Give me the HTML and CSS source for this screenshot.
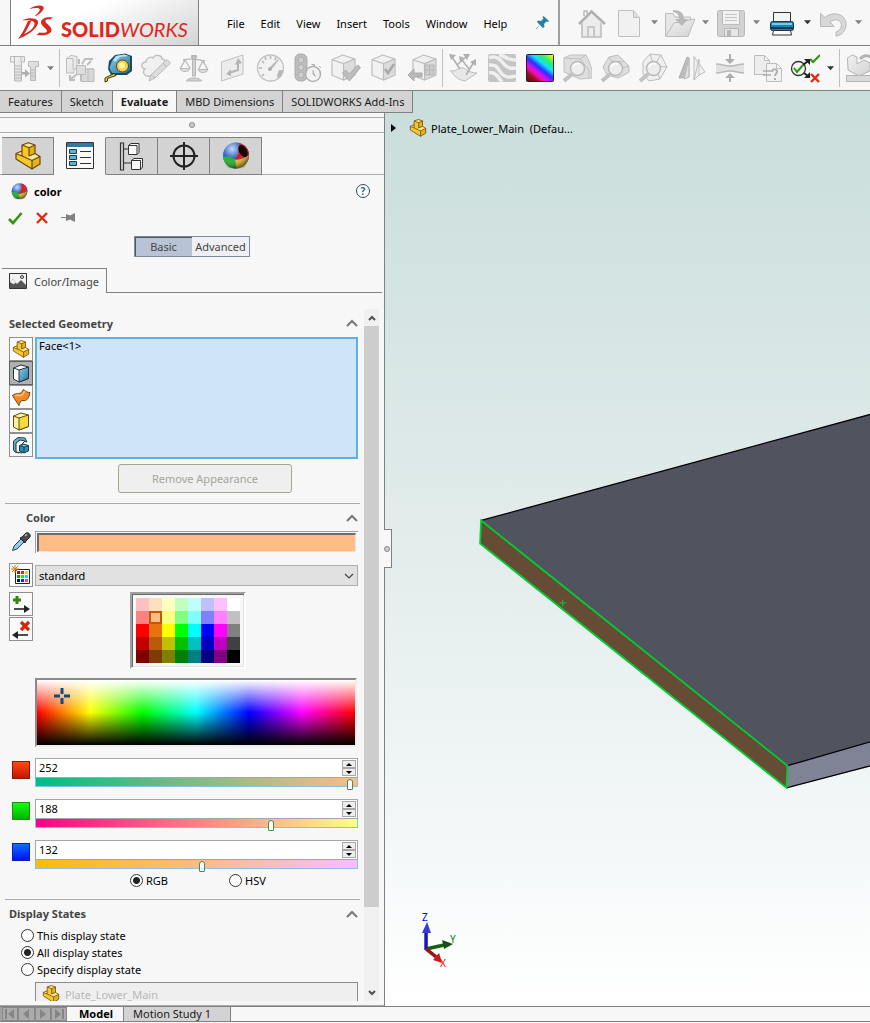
FILE: index.html
```html
<!DOCTYPE html>
<html lang="en">
<head>
  <meta charset="UTF-8" />
  <meta name="viewport" content="width=device-width, initial-scale=1.0"/>
  <title>SOLIDWORKS</title>
  <link rel="stylesheet" href="styles.css">
</head>
<body>

  <!-- shared icons -->
  <svg class="defs" width="0" height="0" aria-hidden="true">
    <defs>
      <linearGradient id="g-grey" x1="0" y1="0" x2="1" y2="1"><stop offset="0" stop-color="#f2f2f2"/><stop offset="1" stop-color="#d2d2d2"/></linearGradient>
      <linearGradient id="g-blue" x1="0" y1="0" x2="1" y2="1"><stop offset="0" stop-color="#8fd0ea"/><stop offset="1" stop-color="#1f7199"/></linearGradient>
      <linearGradient id="g-zebra" x1="0.1" y1="1" x2="0.9" y2="0"><stop offset="0" stop-color="#5a1408"/><stop offset="0.17" stop-color="#a01020"/><stop offset="0.27" stop-color="#f010a0"/><stop offset="0.37" stop-color="#d010ff"/><stop offset="0.5" stop-color="#2830ff"/><stop offset="0.65" stop-color="#10e0ff"/><stop offset="0.82" stop-color="#30f060"/><stop offset="1" stop-color="#f8f800"/></linearGradient>
      <radialGradient id="g-shine" cx="0.35" cy="0.25" r="0.75"><stop offset="0" stop-color="#fff" stop-opacity="0.75"/><stop offset="0.5" stop-color="#fff" stop-opacity="0"/><stop offset="1" stop-color="#000" stop-opacity="0.5"/></radialGradient>
    </defs>
    <symbol id="i-part" viewBox="0 0 26 28">
      <path fill="#f6c82d" d="M7 3 13.500.8 20 3v8.500l5 3V22l-8 5L1 17v-5.500L7 9z"/>
      <path fill="#fbe795" d="M7 3 13.500.8 20 3l-6 2.800zM1 11.500 7 9v5l4.500 2.500 2.500-2.500 6-2.500 5 3-8 4z"/>
      <path fill="#dba416" d="M14 5.800 20 3v8.500L14 14zM17 18.500l8-4V22l-8 5z" opacity="0.600"/>
      <path stroke="#6b4708" stroke-width="1.200" stroke-linejoin="round" d="M7 3 13.500.8 20 3v8.500l5 3V22l-8 5L1 17v-5.500L7 9zM7 3l7 2.800L20 3M14 5.800V14M7 9v5l10 4.500 8-4M17 18.500V27M1 11.500 7 14M14 14l6-2.500"/>
    </symbol>
    <symbol id="i-ball" viewBox="0 0 28 28">
      <ellipse cx="14" cy="24" rx="10" ry="3" fill="#bbb"/>
      <circle cx="14" cy="13.500" r="13" fill="#2a62c8"/>
      <path fill="#22b02c" d="M1 15c5-1.500 9 0 12 2.500l1.500 9C7 27 2 22 1 15z"/>
      <path fill="#e8c02a" d="M13 17.500c5 .5 10-1.500 14-5-.2 8-5 14-12.500 14z"/>
      <path fill="#d8141c" d="M17 1c6 1.500 10 6 10 11.500-4 3.500-9 5.500-14 5 3-4 4.500-10 4-16.500z"/>
      <circle cx="14" cy="13.500" r="13" fill="url(#g-shine)"/>
    </symbol>
    <symbol id="i-caret" viewBox="0 0 8 5"><path d="M0 0h8L4 4.500z"/></symbol>
    <symbol id="i-up" viewBox="0 0 12 8"><path stroke="#777" stroke-width="2" d="M1 7l5-5 5 5"/></symbol>
    <symbol id="i-lens" viewBox="0 0 30 30">
      <path stroke="#c2c2c2" stroke-width="4" d="M10 21l-8 7"/>
      <circle cx="15.500" cy="15.500" r="7" fill="#ededed" stroke="#bababa" stroke-width="1.500"/>
      <path stroke="#fff" stroke-width="1.500" d="M11 14c1-3 4-4 7-3"/>
    </symbol>
    <symbol id="i-cube" viewBox="0 0 26 28">
      <path fill="#f1f1f1" d="M1 6 12 1l13 4v17l-12 5L1 22z"/>
      <path fill="#dcdcdc" d="M13 10 25 5v17l-12 5z"/>
      <path stroke="#bcbcbc" stroke-width="1.200" d="M1 6 12 1l13 4v17l-12 5L1 22zM1 6l12 4 12-5M13 10v17"/>
    </symbol>
  </svg>

  <header class="titlebar">
    <div class="logo">
      <svg class="logo-mark" viewBox="0 0 36 36" aria-hidden="true">
        <g fill="#da291c">
          <path d="M12 3.500C16 1 21 0 24 1c4 1 1 6-6 10l-1-.5c4-3 6-6 4-7-2-.8-6-.4-9 .5z"/>
          <path d="M5 15c5-2.500 12-2.500 14.500.5C22 19 16 28 0 34c4-5 7-11 10-18l3.500-.5C11 21 9 25 6 29c8-3 12-9 10-12-2-2-6-2-11-1.500z"/>
          <path d="M35 12.500l-3 2c-3-.5-5 .3-4.500 2 1 2.500 6 5 6 8.500 0 4-6 6-15 5l3-2.500c4 .8 7.500.3 7.500-1.500 0-2.500-6-5-6-8.500 0-4 5-6 12-5z"/>
        </g>
      </svg>
      <span class="logo-text"><b>SOLID</b><i>WORKS</i></span>
    </div>
    <nav class="menu">
      <a href="#">File</a><a href="#">Edit</a><a href="#">View</a><a href="#">Insert</a><a href="#">Tools</a><a href="#">Window</a><a href="#">Help</a>
    </nav>
    <button class="pin" aria-label="Keep menu visible"><svg width="14" height="14" viewBox="0 0 14 14"><path fill="#2a7fa8" d="M7.500 0 13 5l-1 1-1.500-.5L8 8l.5 3-1.500 1-3-3L.5 13 0 12.500 4 9 1 6l1-1.500 3 .5 2.500-2.500L6.500 1z"/></svg></button>
    <div class="quick">
      <button class="tool" aria-label="Home" disabled><svg viewBox="0 0 30 30"><path fill="#ececec" d="M6 14v15h19V14L15.500 5z"/><path stroke="#bcbcbc" stroke-width="1.500" d="M6 15v14h19V15M8 8V3h3v3M18 29V19h-6v10"/><path stroke="#b0b0b0" stroke-width="2.500" d="M3 16 15.500 3.500 29 16"/></svg></button>
      <button class="tool" aria-label="New" disabled><svg viewBox="0 0 30 30"><path fill="#f1f1f1" stroke="#c0c0c0" d="M4.500 2.500h15l6 7v19h-21z"/><path fill="#ddd" stroke="#c0c0c0" d="M19.500 2.500v7h6"/></svg></button>
      <button class="drop" aria-label="New options"><svg><use href="#i-caret"/></svg></button>
      <button class="tool" aria-label="Open" disabled><svg viewBox="0 0 30 30"><path fill="#e6e6e6" stroke="#bcbcbc" d="M.5 28V5.500H8L10 9h15.500v4"/><path fill="url(#g-grey)" stroke="#bcbcbc" d="M.5 28.500 9 15l21-4-7 17.500z"/><path fill="#b8b8b8" d="M8 2c7 0 11 3 11 9h4l-6 7-7-7h4c0-4-1-6-6-7z"/></svg></button>
      <button class="drop" aria-label="Open options"><svg><use href="#i-caret"/></svg></button>
      <button class="tool" aria-label="Save" disabled><svg viewBox="0 0 30 30"><rect x="1.500" y="2.500" width="27" height="26" rx="2" fill="#d2d2d2" stroke="#b8b8b8"/><path fill="#f2f2f2" stroke="#bdbdbd" d="M6.500 2.500h17v14h-17z"/><path stroke="#c4c4c4" d="M9 6.500h12M9 9.500h12M9 12.500h12"/><path fill="#e6e6e6" stroke="#b4b4b4" d="M8.500 20.500h14v8h-14z"/><path fill="#b8b8b8" d="M11 22h4v6h-4z"/></svg></button>
      <button class="drop" aria-label="Save options"><svg><use href="#i-caret"/></svg></button>
      <button class="tool" aria-label="Print"><svg viewBox="0 0 30 30"><path fill="#f4f4f4" stroke="#333" d="M6.500 4.500h17V14h-17z"/><rect x="3.500" y="13.500" width="23" height="9" rx="2" fill="#1e80b0" stroke="#12394d"/><path fill="#7cc6e4" d="M5 15h20v2H5z"/><path fill="#12394d" d="M4 19h22v2H4z"/><path fill="#fafafa" stroke="#333" d="M6.500 22.500h17l1 4.500h-19z"/></svg></button>
      <button class="drop on" aria-label="Print options"><svg><use href="#i-caret"/></svg></button>
      <button class="tool" aria-label="Undo" disabled><svg viewBox="0 0 30 30"><path fill="#d8d8d8" stroke="#b8b8b8" d="M2.500 5.500 7 9.500C16 2 28 7 28 16c0 7-4 11-10 12v-4c5-2 6-5 5-9-2-4-7-4-11-1l4 4.500H2.500z"/></svg></button>
      <button class="drop" aria-label="Undo options"><svg><use href="#i-caret"/></svg></button>
    </div>
  </header>

  <div class="toolbar">
    <button class="tool" aria-label="Hole Wizard" disabled><svg viewBox="0 0 30 30"><path fill="url(#g-grey)" stroke="#b8b8b8" d="M.5 3.500h14V9h-3v19h-7V9h-4zM4.500 3.500V9M11 3.500V9M18.500 8.500h10v5h-3v14h-5v-14h-2z"/><path stroke="#b8b8b8" d="M5 13h6M5 16h6M5 19h6M5 22h6M5 25h6M21 17h4M21 20h4M21 23h4"/><path fill="#b0b0b0" d="M12 19h3v-3l5 4.500-5 4v-3h-3z"/></svg></button>
    <button class="drop" aria-label="Hole options"><svg><use href="#i-caret"/></svg></button>
    <span class="sep"></span>
    <button class="tool" aria-label="Design Study" disabled><svg viewBox="0 0 30 30"><path fill="url(#g-grey)" stroke="#bcbcbc" d="M1.500 5.500 6 2.500l6 1V16H9v4H1.500zM1.500 5.500H8V16M16 16h13v12.500H16z"/><path fill="#ddd" stroke="#bcbcbc" d="M11.500 12.500h9v9h-9zM20 16h9M23 16v12"/><path stroke="#bcbcbc" stroke-width="2" d="M14 11V6M17 11l3-5h8M22 12l4-4M12 21l-6 5M5 22v5h5M16 22v6"/></svg></button>
    <button class="tool" aria-label="Measure"><svg viewBox="0 0 30 30"><path fill="#174a66" d="M6 8 12 2l10-1.500L29 3v15l-5 4H8l-3-6z"/><path fill="url(#g-blue)" d="M9 8l4-5 8-1.500 6 2V17l-4 3H9L6.500 15z"/><path fill="#b5e2f3" d="m10 7 3-4 8-1.500L26 3l-9 1-5 5z"/><circle cx="19.500" cy="13" r="6" fill="#f7d54a" stroke="#5b4713"/><circle cx="19" cy="12.500" r="3" fill="#fdf2a8"/><path fill="#f5d22c" stroke="#3a2d05" d="M11 20.500 2 25v4l2.500-1v-2.500L13 22.500z"/></svg></button>
    <button class="tool" aria-label="Markup" disabled><svg viewBox="0 0 30 30"><path fill="#f0f0f0" stroke="#bebebe" stroke-width="1.300" d="M7 23c-4 1-6-5-3-7-5-1-4-7 1-7 0-4 5-6 7-4 2-4 9-3 9 1 3 0 4 3 3 6L12 24z"/><path fill="#ddd" stroke="#b8b8b8" d="M26 6.500 29.500 10 14 25l-6 3 2-6z"/><path stroke="#b8b8b8" d="m10 22 4 3M22 10l3.500 4"/></svg></button>
    <button class="tool" aria-label="Mass Properties" disabled><svg viewBox="0 0 30 30"><path fill="#d2d2d2" stroke="#b5b5b5" d="M13.500 3.500h3V23h-3zM7.500 28c1-4 14-4 15 0zM12.500 2.500h5V5h-5z"/><path stroke="#b8b8b8" stroke-width="1.300" d="M4 7c8-2 14-1 22 1M6 7 1.500 15M6 7l5 8M24 8l-4.500 8M24 8l4.500 8"/><path fill="#dcdcdc" stroke="#b8b8b8" d="M1 15.500h10c-1 4-9 4-10 0zM19 16.500h10c-1 4-9 4-10 0z"/></svg></button>
    <button class="tool" aria-label="Section Properties" disabled><svg viewBox="0 0 30 30"><path fill="#ececec" stroke="#c0c0c0" d="M4.500 9 26 2v19L4.500 28z"/><path stroke="#b4b4b4" stroke-width="2" d="M21 9v8l-9 3"/><path fill="#b4b4b4" d="m21 5 4 5-7 2zM9 21l5-5v7z"/></svg></button>
    <button class="tool" aria-label="Sensor" disabled><svg viewBox="0 0 30 30"><circle cx="15.500" cy="15" r="13" fill="#f2f2f2" stroke="#c2c2c2" stroke-width="1.300"/><path stroke="#b5b5b5" stroke-width="1.500" d="M15.500 3v3M4 15h3M7 8l2 2M7 23l2-2M10 4l1 3M21 4l-1 3"/><path fill="#b8b8b8" d="M14 15 23 6l1 1-8 10zM22 22l2-5h4c0 3-2 7-5 9z"/><circle cx="15" cy="16" r="2" fill="#b0b0b0"/></svg></button>
    <button class="tool" aria-label="Performance" disabled><svg viewBox="0 0 30 30"><rect x="2" y="1" width="12" height="27" rx="5" fill="#bdbdbd" stroke="#aaa"/><g fill="#cfcfcf" stroke="#aeaeae"><circle cx="8" cy="7" r="3"/><circle cx="8" cy="14.500" r="3"/><circle cx="8" cy="22" r="3"/></g><circle cx="20" cy="21" r="7.500" fill="#f3f3f3" stroke="#b2b2b2" stroke-width="1.600"/><path fill="#bbb" stroke="#b2b2b2" d="M20 17v4l3 3M18.500 11.500h3v2M26 13l2 2"/></svg></button>
    <button class="tool" aria-label="Check" disabled><svg viewBox="0 0 30 30"><use href="#i-cube" width="25" height="27" y="1"/><path fill="#bdbdbd" stroke="#aaa" d="m11.500 20 3-3 4 4 8-9 3 2.500L18.500 28z"/></svg></button>
    <button class="tool" aria-label="Geometry Analysis" disabled><svg viewBox="0 0 30 30"><use href="#i-cube" width="25" height="27" x="2" y="1"/><path stroke="#a8a8a8" stroke-width="2.500" d="m16 16 3 4 6-9"/></svg></button>
    <button class="tool" aria-label="Import Diagnostics" disabled><svg viewBox="0 0 30 30"><use href="#i-cube" width="25" height="27" x="5" y="1"/><path fill="#ccc" stroke="#b4b4b4" d="M18 12h9v10h-9zM18 17h9M22.500 12v10"/><path fill="#b8b8b8" stroke="#aaa" d="m1 22 6-6v4h8v4H7v4z"/></svg></button>
    <span class="sep"></span>
    <button class="tool" aria-label="Deviation" disabled><svg viewBox="0 0 30 30"><path fill="#e8e8e8" stroke="#bdbdbd" d="M2.500 17.500C8 20 12 12 17 16c4 3 8 4 12 4l-12 8C10 27 6 23 2.500 17.500z"/><path stroke="#b0b0b0" stroke-width="1.600" d="M12 16 4 4M9 12l10-9M18 22l8-13M14 7l7 9"/><path fill="#b0b0b0" d="m1 1 7 1-5 5zM15 1h7l-3 6zM28 6v7l-6-4zM11 3l6 2-5 4z"/></svg></button>
    <button class="tool" aria-label="Zebra Stripes" disabled><svg viewBox="0 0 30 30"><rect x="2" y="1" width="28" height="28" rx="2" fill="#c4c4c4"/><path stroke="#efefef" stroke-width="3.500" d="M3 5c7-3 11 1 14 5s8 6 13 5M13 2c5 0 7 5 17 5M3 12c8-1 9 4 12 8s9 5 15 3M3 20c7-1 8 3 13 9"/></svg></button>
    <button class="tool" aria-label="Curvature"><svg viewBox="0 0 30 30"><rect x="2.500" y="1.500" width="27" height="27" rx="1" fill="url(#g-zebra)" stroke="#222"/></svg></button>
    <button class="tool" aria-label="Draft Analysis" disabled><svg viewBox="0 0 30 30"><path fill="#dedede" stroke="#c0c0c0" d="M2 5l6-3h16l3 6 3 9v8l-12 1L2 19z"/><path stroke="#c0c0c0" d="M2 5l16 1 6-4M18 6l9 11v8"/><use href="#i-lens"/></svg></button>
    <button class="tool" aria-label="Undercut Analysis" disabled><svg viewBox="0 0 30 30"><path fill="#dedede" stroke="#bdbdbd" d="M3 14l6-10 9-2 6 6 5 5v6l-5 3-6 3-11-3z"/><path stroke="#bdbdbd" d="m9 4 4 6 11-2M29 13l-7 2"/><use href="#i-lens"/></svg></button>
    <button class="tool" aria-label="Parting Line Analysis" disabled><svg viewBox="0 0 30 30"><path fill="#efefef" stroke="#bdbdbd" d="m5 9 7-8 11 1 6 12-7 12-11 2-6-7z"/><path stroke="#bdbdbd" d="m12 1 4 12 13 1M23 2l-7 11 6 13"/><use href="#i-lens"/></svg></button>
    <button class="tool" aria-label="Symmetry Check" disabled><svg viewBox="0 0 30 30"><path fill="#bdbdbd" stroke="#adadad" d="M3 25 11 4l2 1v19z"/><path fill="#e0e0e0" stroke="#b8b8b8" d="M8 26 13 5v19z"/><path fill="#f1f1f1" stroke="#bdbdbd" d="M18 3.500 29 19l-6 3-5 5zM18 27l5-21v16"/></svg></button>
    <button class="tool" aria-label="Thickness Analysis" disabled><svg viewBox="0 0 30 30"><path fill="#e2e2e2" d="M2 11c6 0 8 2 14 2s8-2 14-2v9c-6 0-8-2-14-2s-8 2-14 2z"/><path stroke="#b8b8b8" stroke-width="1.300" d="M2 11c6 0 8 2 14 2s8-2 14-2M2 20c6 0 8-2 14-2s8 2 14 2"/><path fill="#adadad" d="M15 1h2v5h4l-5 5-5-5h4zM15 29h2v-4h4l-5-5-5 5h4z"/></svg></button>
    <button class="tool" aria-label="Compare Documents" disabled><svg viewBox="0 0 30 30"><path fill="#ededed" stroke="#bdbdbd" d="M2.500 2.500h10l5 5v14h-15zM12.500 2.500v5h5"/><path fill="#f2f2f2" stroke="#bdbdbd" d="M14.500 10.500h10l5 5v13h-15zM24.500 10.500v5h5"/><path stroke="#adadad" stroke-width="1.600" d="M11 18h8M11 22h8"/><path stroke="#b0b0b0" stroke-width="2" d="M20 19c0-4 6-3 5 0-.5 2-2 2-2 4M23 25v2"/></svg></button>
    <button class="tool" aria-label="Check Active Document"><svg viewBox="0 0 30 30"><circle cx="8.500" cy="15.500" r="7" fill="#f4f4f4" stroke="#333" stroke-width="1.300"/><path stroke="#2c9410" stroke-width="2" d="m4 15 3 4 6-7M20 6l3 3 7-7"/><path stroke="#222" stroke-width="2" d="m13 12 5-4M14 20l4 3"/><path fill="#222" d="M14 6h6v6zM14 25h6v-6z"/><path stroke="#e32b0c" stroke-width="2.400" d="m21 21 8 8M29 21l-8 8"/></svg></button>
    <button class="drop on" aria-label="Check options"><svg><use href="#i-caret"/></svg></button>
    <span class="sep"></span>
    <button class="tool" aria-label="Simulation" disabled><svg viewBox="0 0 30 30"><path fill="url(#g-grey)" stroke="#b4b4b4" d="M2.500 5 7 2l5 2v7l7-4 6 3v8l-11 5-11-6z"/><path fill="#dadada" stroke="#b4b4b4" d="M1.500 22.500h28v6h-28z"/><path stroke="#b4b4b4" stroke-width="3" d="M15 6c5-6 11-3 14 2"/></svg></button>
  </div>

  <main class="workspace">
    <nav class="ribbon">
      <a href="#">Features</a><a href="#">Sketch</a><a href="#" class="active">Evaluate</a><a href="#">MBD Dimensions</a><a href="#">SOLIDWORKS Add-Ins</a>
    </nav>

    <div class="content">
      <aside class="panel">
        <div class="grip"><span class="dot"></span></div>

        <div class="manager-tabs">
          <button aria-label="Feature tree"><svg width="26" height="28"><use href="#i-part"/></svg></button>
          <button class="active" aria-label="Property manager"><svg width="28" height="28" viewBox="0 0 28 28"><path fill="#fafafa" stroke="#333" d="M.5.5h27v26H.5z"/><path fill="#2b7da5" d="M1 1h26v4H1z"/><path fill="#5fb0d3" stroke="#123e55" d="M3.500 7.500h7v4h-7zM3.500 13.500h7v4h-7zM3.500 19.500h7v4h-7z"/><path stroke="#333" d="M14 9.500h11M14 15.500h11M14 21.500h11"/></svg></button>
          <button aria-label="Configurations"><svg width="26" height="29" viewBox="0 0 26 29"><path stroke="#333" stroke-width="1.200" d="M1.500 1v27h3V1zM4 7h6M4 21h9"/><g fill="#fafafa" stroke="#333"><path d="M9.500 3.500 12 1.500h8v9l-2 2H9.500zM12.500 18.500l2.500-2h8.500v8.500l-2 2.500h-9z"/><path fill="none" d="M9.500 3.500H18v9M12.500 18.500h9v9"/></g></svg></button>
          <button aria-label="Dimension expert"><svg width="28" height="28" viewBox="0 0 28 28"><circle cx="14" cy="14" r="10.500" stroke="#222" stroke-width="2"/><path stroke="#222" stroke-width="2" d="M14 0v28M0 14h28"/></svg></button>
          <button aria-label="Display manager"><svg width="28" height="28" viewBox="0 0 28 28"><use href="#i-ball"/><ellipse cx="21" cy="9" rx="4" ry="6.500" fill="#1a0505" transform="rotate(-30 21 9)"/></svg></button>
        </div>

        <div class="panel-title">
          <svg width="17" height="17"><use href="#i-ball"/></svg>
          <h1>color</h1>
          <button class="help" aria-label="Help">?</button>
        </div>

        <div class="confirm">
          <button aria-label="OK"><svg width="15" height="14" viewBox="0 0 15 14"><path stroke="#2f9a0c" stroke-width="2.600" d="m1 8 4 4 8.500-10"/></svg></button>
          <button aria-label="Cancel"><svg width="12" height="12" viewBox="0 0 12 12"><path stroke="#df2a0a" stroke-width="2.400" d="m1 1 10 10M11 1 1 11"/></svg></button>
          <button aria-label="Keep visible"><svg width="15" height="11" viewBox="0 0 15 11"><path fill="#808080" d="M0 5h5V2l4 1.500L14 1v9L9 7.500 5 9V6H0z"/></svg></button>
        </div>

        <div class="mode">
          <button class="active">Basic</button><button>Advanced</button>
        </div>

        <div class="subtabs">
          <button><svg width="18" height="16" viewBox="0 0 18 16"><path fill="#f2f2f2" stroke="#333" d="M.5.5h17v15H.5z"/><path fill="#555" d="M1 9l3-3 4 5 4-4 5 5v3H1z"/><path fill="#f2f2f2" d="m1 9 3-3 3 4-3 1z"/><circle cx="13" cy="4" r="1.500" stroke="#333"/></svg>Color/Image</button>
        </div>

        <div class="scroll">
          <form class="props">
            <section>
              <h2>Selected Geometry <svg><use href="#i-up"/></svg></h2>
              <div class="row">
                <div class="filters">
                  <button type="button" aria-label="Select part"><svg width="18" height="18"><use href="#i-part"/></svg></button>
                  <button type="button" class="active" aria-label="Select faces"><svg width="18" height="19" viewBox="0 0 18 19"><path fill="#fff" stroke="#26323a" d="M1.500 4 9 1l7.500 2v11.500L7 18l-5.500-3z"/><path fill="url(#g-blue)" stroke="#26323a" d="m7 6 9.500-3v11.500L7 18z"/><path stroke="#26323a" d="M1.500 4 7 6"/></svg></button>
                  <button type="button" aria-label="Select surfaces"><svg width="20" height="19" viewBox="0 0 20 19"><path fill="#f08a24" stroke="#7c3c04" d="M1.500 7.500c4-3 6-1 9-3 1-1 1-2 2-3 2 2 4 3 6.500 3-1 5-3 9-7 8-3 0-3 2-4 5-2-3-4-6-6.500-10z"/><path stroke="#ffc27a" stroke-width="1.500" d="M4 8c3-2 5 1 7-1l3-4"/></svg></button>
                  <button type="button" aria-label="Select bodies"><svg width="18" height="19" viewBox="0 0 18 19"><path fill="#fff3a0" stroke="#5e4a08" d="M1.500 4 9 1l7.500 2v11.500L7 18l-5.500-3z"/><path fill="#f7dc3c" stroke="#5e4a08" d="m7 6 9.500-3v11.500L7 18z"/><path stroke="#5e4a08" d="M1.500 4 7 6"/></svg></button>
                  <button type="button" aria-label="Select features"><svg width="18" height="19" viewBox="0 0 18 19"><path fill="#5fb0d3" stroke="#26424f" d="M1.500 14V5L6 1.500 13 2l2 4-5-1-3 3v9l-4-1z"/><path fill="#f5f5f5" stroke="#333" d="M4 16V7l4-3 5 1-3 3v9z"/><path fill="#2f8cba" stroke="#123e55" d="M7.500 9.500 11 8l5.500 1.500V15L12 17l-4.500-2zM7.500 9.500 12 11l4.500-1.500M12 11v6"/></svg></button>
                </div>
                <textarea class="selection" aria-label="Selected geometry" spellcheck="false">Face&lt;1&gt;</textarea>
              </div>
              <button type="button" class="remove" disabled>Remove Appearance</button>
            </section>

            <section>
              <h2 class="sub">Color <svg><use href="#i-up"/></svg></h2>
              <div class="row">
                <button type="button" class="plain" aria-label="Pick colour"><svg width="20" height="20" viewBox="0 0 20 20"><path fill="#8fcbe6" stroke="#174a66" d="M1.500 18.500 3 14l7-7 3 3-7 7z"/><path fill="#4a4a4a" stroke="#222" d="m9 6 2-1 4-4c2-1 5 1 4 4l-4 4-1 2z"/><path stroke="#b5b5b5" stroke-width="1.500" d="m14 4 2-2"/></svg></button>
                <div class="swatch"><span></span></div>
              </div>
              <div class="row preset">
                <button type="button" class="square" aria-label="Create swatch"><svg width="20" height="20" viewBox="0 0 20 20"><path fill="#fff" stroke="#222" d="M4.500 4.500h14v14h-14z"/><path fill="#d22" d="M10 6h3v3h-3z"/><path fill="#fc0" d="M14 6h3v3h-3z"/><path fill="#911" d="M6 6h3v3H6z"/><path fill="#0a0" d="M6 10h3v3H6z"/><path fill="#0e2" d="M10 10h3v3h-3z"/><path fill="#0df" d="M14 10h3v3h-3z"/><path fill="#00a" d="M6 14h3v3H6z"/><path fill="#22d" d="M10 14h3v3h-3z"/><path fill="#e3d" d="M14 14h3v3h-3z"/><path stroke="#d57a10" d="M4 0v8M0 4h8M1 1l6 6M7 1 1 7"/></svg></button>
                <div class="select">
                  <select aria-label="Swatch"><option>standard</option></select>
                  <svg width="10" height="6" viewBox="0 0 10 6"><path stroke="#444" stroke-width="1.200" d="m1 1 4 4 4-4"/></svg>
                </div>
              </div>
              <div class="row swatches">
                <div class="filters">
                  <button type="button" class="square" aria-label="Add to swatch"><svg width="18" height="19" viewBox="0 0 18 19"><path stroke="#2f8a08" stroke-width="3" d="M5 1v8M1 5h8"/><path stroke="#222" stroke-width="1.600" d="M2 14h13"/><path fill="#222" d="m12 10 6 4-6 4z"/></svg></button>
                  <button type="button" class="square" aria-label="Remove from swatch"><svg width="18" height="19" viewBox="0 0 18 19"><path stroke="#d5260a" stroke-width="3.200" d="m9 2 8 8M17 2l-8 8"/><path stroke="#222" stroke-width="1.600" d="M3 15h13"/><path fill="#222" d="m6 11-6 4 6 4z"/></svg></button>
                </div>
                <div class="palette" id="palette"></div>
              </div>
              <div class="spectrum">
                <svg class="cross" width="16" height="16" viewBox="0 0 16 16"><path stroke="#0b4c86" stroke-width="3" d="M8 0v6M8 10v6M0 8h6M10 8h6"/></svg>
              </div>

              <div class="row channel red">
                <i></i>
                <div class="field">
                  <div class="num"><input type="number" aria-label="Red" value="252" min="0" max="255"><span class="spin"><button type="button" aria-label="Red up"></button><button type="button" aria-label="Red down"></button></span></div>
                  <input type="range" aria-label="Red level" min="0" max="255" value="252">
                </div>
              </div>
              <div class="row channel green">
                <i></i>
                <div class="field">
                  <div class="num"><input type="number" aria-label="Green" value="188" min="0" max="255"><span class="spin"><button type="button" aria-label="Green up"></button><button type="button" aria-label="Green down"></button></span></div>
                  <input type="range" aria-label="Green level" min="0" max="255" value="188">
                </div>
              </div>
              <div class="row channel blue">
                <i></i>
                <div class="field">
                  <div class="num"><input type="number" aria-label="Blue" value="132" min="0" max="255"><span class="spin"><button type="button" aria-label="Blue up"></button><button type="button" aria-label="Blue down"></button></span></div>
                  <input type="range" aria-label="Blue level" min="0" max="255" value="132">
                </div>
              </div>
              <div class="model">
                <label><input type="radio" name="model" checked>RGB</label>
                <label><input type="radio" name="model">HSV</label>
              </div>
            </section>

            <section>
              <h2>Display States <svg><use href="#i-up"/></svg></h2>
              <div class="states">
                <label><input type="radio" name="state">This display state</label>
                <label><input type="radio" name="state" checked>All display states</label>
                <label><input type="radio" name="state">Specify display state</label>
              </div>
              <div class="statelist"><svg width="20" height="18"><use href="#i-part"/></svg>Plate_Lower_Main</div>
            </section>
          </form>
          <div class="scrollbar">
            <button aria-label="Scroll up"><svg width="8" height="6" viewBox="0 0 8 6"><path stroke="#505050" stroke-width="2" d="m1 5 3-3 3 3"/></svg></button>
            <span class="thumb"></span>
            <button aria-label="Scroll down"><svg width="8" height="6" viewBox="0 0 8 6"><path stroke="#505050" stroke-width="2" d="m1 1 3 3 3-3"/></svg></button>
          </div>
        </div>
        <div class="panel-end"></div>
        <button class="splitter" aria-label="Collapse panel"><span class="dot"></span></button>
      </aside>

      <div class="viewport">
        <svg class="scene" viewBox="0 0 485 892" preserveAspectRatio="xMinYMin slice">
          <path fill="#51535f" d="M96 407 485 301V630l-83 22z"/>
          <path fill="#808296" d="m402 652 83-24v25l-84 21z"/>
          <path fill="#664b35" d="m96 407 306 245-1 22L95 430z"/>
          <path stroke="#000" stroke-width="1.300" d="M96 407 485 301M402 652l83-24M401 674l84-22"/>
          <path stroke="#0c3" stroke-width="1.800" d="m96 407 306 245-1 22L95 430z"/>
          <path stroke="#0c3" d="M174 489.500h7M177.500 486v7"/>
          <g class="triad">
            <path stroke="#15600f" stroke-width="3.500" d="m41 835 18-4"/><path fill="#1b4d16" d="m57 826 11 4-9 5z"/>
            <path stroke="#1818b8" stroke-width="3.500" d="M41 836v-17"/><path fill="#3a3ad8" d="m37 819 5-11 4 11z"/>
            <path stroke="#a01414" stroke-width="3.500" d="m41 835 10 8"/><path fill="#c81a1a" d="m54 839 3 10-9-3z"/>
            <text x="37" y="807" fill="#00f">Z</text><text x="65" y="829" fill="#080">Y</text><text x="55" y="853" fill="#f00">X</text>
          </g>
        </svg>
        <div class="flyout">
          <button aria-label="Expand tree"><svg width="5" height="8" viewBox="0 0 5 8"><path fill="#000" d="m0 0 5 4-5 4z"/></svg></button>
          <svg width="18" height="18"><use href="#i-part"/></svg>
          <span>Plate_Lower_Main &nbsp;(Defau...</span>
        </div>
      </div>
    </div>
  </main>

  <footer class="bottom">
    <div class="navs">
      <button aria-label="First tab"><svg width="10" height="10" viewBox="0 0 10 10"><path d="M0 0h2v10H0zM9 0v10L3 5z"/></svg></button>
      <button aria-label="Previous tab"><svg width="10" height="10" viewBox="0 0 10 10"><path d="M8 0v10L2 5z"/></svg></button>
      <button aria-label="Next tab"><svg width="10" height="10" viewBox="0 0 10 10"><path d="M2 0v10l6-5z"/></svg></button>
      <button aria-label="Last tab"><svg width="10" height="10" viewBox="0 0 10 10"><path d="M8 0h2v10H8zM1 0v10l6-5z"/></svg></button>
    </div>
    <a href="#" class="active">Model</a>
    <a href="#">Motion Study 1</a>
  </footer>

  <script>
    const rows = [
      ["#ffc0c0", "#ffdfc0", "#ffffc0", "#c0ffc0", "#c0ffff", "#c0c0ff", "#ffc0ff", "#ffffff"],
      ["#ff8080", "#ffbc84", "#ffff80", "#80ff80", "#80ffff", "#8080ff", "#ff80ff", "#c0c0c0"],
      ["#ff0000", "#e8720c", "#ffff00", "#00ff00", "#00ffff", "#0000ff", "#ff00ff", "#808080"],
      ["#c00000", "#b85c0a", "#c0c000", "#00c000", "#00c0c0", "#0000c0", "#c000c0", "#404040"],
      ["#800000", "#7c3c06", "#808000", "#008000", "#008080", "#000080", "#800080", "#000000"]
    ];
    const palette = document.getElementById('palette');

    rows.flat().forEach(color => {
      const cell = document.createElement('button');
      cell.type = 'button';
      cell.style.background = color;
      cell.setAttribute('aria-label', color);
      if (color === '#ffbc84') cell.className = 'picked';
      cell.addEventListener('click', () => {
        palette.querySelector('.picked').classList.remove('picked');
        cell.classList.add('picked');
      });
      palette.appendChild(cell);
    });
  </script>

</body>
</html>
```
FILE: styles.css
```css
:root {
  --bg: #f7f7f7;
  --tab: #d3d3d3;
  --line: #808080;
  --soft-line: #ababab;
  --text: #1a1a1a;
  --heading: #444;
}

* {
  box-sizing: border-box;
}

body {
  margin: 0;
  height: 100vh;
  display: flex;
  flex-direction: column;
  background: var(--bg);
  color: var(--text);
  font-family: "Noto Sans", "Open Sans", sans-serif;
  font-size: 11px;
  fill: none;
  overflow: hidden;
}

button, input, select, textarea {
  font: inherit;
  color: inherit;
  margin: 0;
  padding: 0;
  border: none;
  border-radius: 0;
  background: none;
}

a {
  color: inherit;
  text-decoration: none;
}

svg {
  display: block;
  flex: none;
}

.defs {
  position: absolute;
}

/* title bar */
.titlebar {
  display: flex;
  align-items: center;
  height: 46px;
  border-bottom: 1px solid var(--line);
  flex: none;
}

.logo {
  display: flex;
  align-items: center;
  align-self: stretch;
  width: 189px;
  margin-left: 10px;
  padding-left: 7px;
  gap: 7px;
  border: solid var(--line);
  border-width: 0 1px;
  background: linear-gradient(155deg, #fff 35%, #d4d4d4);
  flex: none;
}

.logo-mark {
  width: 36px;
  height: 36px;
}

.logo-text {
  font-family: Lato, sans-serif;
  font-size: 20px;
  line-height: 24px;
  color: #da291c;
  margin-top: 12px;
}

.logo-text b {
  font-weight: 900;
}

.menu {
  display: flex;
  padding: 2px 0 0 20px;
  color: #000;
}

.menu a {
  padding: 4px 8px;
}

.pin {
  margin-left: auto;
  padding: 0 8px;
}

.quick {
  display: flex;
  align-items: center;
  align-self: stretch;
  padding: 0 5px 0 12px;
  border-left: 2px solid #a0a0a0;
  flex: none;
}

.tool {
  width: 38px;
  padding: 0 4px;
  flex: none;
}

.tool svg {
  width: 30px;
  height: 30px;
}

.drop {
  display: flex;
  justify-content: center;
  width: 13px;
  fill: #808080;
  flex: none;
}

.drop.on {
  fill: #333;
}

.drop svg {
  width: 7px;
  height: 5px;
}

.toolbar {
  display: flex;
  align-items: center;
  height: 45px;
  padding-left: 6px;
  border-bottom: 1px solid var(--line);
  overflow: hidden;
  flex: none;
}

.sep {
  width: 1px;
  height: 38px;
  margin: 0 1px;
  background: #c0c0c0;
  flex: none;
}

.drop + .sep {
  margin-left: 2px;
}

/* workspace */
.workspace {
  flex: 1;
  min-height: 0;
  display: flex;
  flex-direction: column;
  background: linear-gradient(#c9dddb, #e0ebea 45%, #f3f7f8 80%, #fff);
}

.ribbon {
  display: flex;
  height: 22px;
  line-height: 21px;
  flex: none;
}

.ribbon a {
  padding: 0 8px;
  background: var(--tab);
  border: solid var(--line);
  border-width: 0 1px 1px 0;
}

.ribbon a.active {
  background: var(--bg);
  font-weight: bold;
}

.content {
  flex: 1;
  min-height: 0;
  display: flex;
}

.panel {
  position: relative;
  display: flex;
  flex-direction: column;
  width: 385px;
  padding-top: 4px;
  background: var(--bg);
  border-right: 1px solid var(--line);
  flex: none;
}

.dot {
  display: block;
  width: 6px;
  height: 6px;
  border: 1px solid #8c8c8c;
  border-radius: 50%;
  background: #ccc;
}

.grip {
  display: flex;
  align-items: center;
  justify-content: center;
  height: 16px;
  border: solid var(--soft-line);
  border-width: 1px 0;
  margin-bottom: 4px;
  flex: none;
}

.manager-tabs {
  display: flex;
  height: 38px;
  padding-left: 2px;
  border-bottom: 1px solid var(--soft-line);
  flex: none;
}

.manager-tabs button {
  display: flex;
  align-items: center;
  justify-content: center;
  width: 52px;
  height: 38px;
  background: var(--tab);
  border: 1px solid var(--line);
  border-left: none;
}

.manager-tabs button.active {
  background: var(--bg);
  border-top-color: var(--bg);
  border-bottom-color: var(--bg);
}

.panel-title {
  display: flex;
  align-items: center;
  gap: 6px;
  height: 28px;
  margin-top: 2px;
  padding: 0 14px 0 11px;
  flex: none;
}

.panel-title h1 {
  margin: 0;
  font-size: 11px;
  font-weight: bold;
  color: #000;
}

.help {
  width: 14px;
  height: 14px;
  margin-left: auto;
  border: 1px solid #2c4a5c;
  border-radius: 50%;
  background: #fff;
  color: #1b6c96;
  font-size: 10px;
  font-weight: bold;
  line-height: 12px;
}

.confirm {
  display: flex;
  align-items: center;
  gap: 13px;
  height: 25px;
  padding-left: 8px;
  flex: none;
}

.mode {
  display: flex;
  align-self: center;
  height: 21px;
  margin-top: 6px;
  border: 1px solid #808a94;
  color: var(--heading);
  flex: none;
}

.mode button {
  width: 57px;
  background: #f0f0f4;
}

.mode .active {
  background: #b8c4d6;
  box-shadow: inset 1px 1px #505860;
}

.subtabs {
  display: flex;
  height: 25px;
  margin: 11px 2px 16px;
  border-bottom: 1px solid var(--line);
  flex: none;
}

.subtabs button {
  display: flex;
  align-items: center;
  gap: 7px;
  height: 25px;
  padding: 0 7px;
  color: var(--heading);
  background: var(--bg);
  border: solid var(--line);
  border-width: 1px 1px 0 0;
}

.scroll {
  flex: 1;
  min-height: 0;
  display: flex;
  padding-right: 5px;
}

.props {
  flex: 1;
  overflow: hidden;
}

.props section {
  margin: 0 4px 0 5px;
  padding: 0 2px 0 4px;
  border-bottom: 1px solid var(--soft-line);
}

.props section:last-child {
  border-bottom: none;
}

.props h2 {
  display: flex;
  align-items: center;
  justify-content: space-between;
  height: 27px;
  margin: 0;
  font-size: 11px;
  font-weight: bold;
  color: var(--heading);
}

.props section:first-child h2 {
  height: 28px;
}

.props h2.sub {
  padding-left: 17px;
}

.props h2 svg {
  width: 12px;
  height: 8px;
}

.row {
  display: flex;
  gap: 2px;
}

.filters {
  display: flex;
  flex-direction: column;
  width: 24px;
  flex: none;
}

.filters button,
.square {
  display: flex;
  align-items: center;
  justify-content: center;
  width: 24px;
  height: 24px;
  background: #fafafa;
  border: 1px solid #909090;
  flex: none;
}

.filters button.active {
  background: #b0b0b0;
  border-color: #606060;
}

.plain {
  width: 24px;
  padding-left: 2px;
  flex: none;
}

.selection {
  flex: 1;
  min-width: 0;
  height: 122px;
  padding: 0 2px;
  border: 2px solid #5cb2e3;
  background: #cfe4f9;
  color: #000;
  line-height: 14px;
  resize: none;
  outline: none;
}

.remove {
  display: block;
  width: 174px;
  height: 29px;
  margin: 5px auto 10px 109px;
  border: 1px solid #a5a592;
  border-radius: 3px;
  background: #efefef;
  color: #a5a59b;
}

.swatch {
  flex: 1;
  height: 22px;
  padding: 1px 2px 1px 1px;
  border: solid #a0a0a0;
  border-width: 1px 0 0 1px;
}

.swatch span {
  display: block;
  height: 19px;
  background: #ffbc84;
  border: solid;
  border-width: 2px 1px 1px 2px;
  border-color: #6d6d6d #e3e3e3 #e3e3e3 #6d6d6d;
}

.preset {
  align-items: center;
  margin-top: 10px;
}

.select {
  position: relative;
  flex: 1;
}

.select select {
  display: block;
  width: 100%;
  height: 21px;
  padding: 0 3px;
  border: 1px solid #adadad;
  background: #e1e1e1;
  color: #000;
  appearance: none;
}

.select svg {
  position: absolute;
  right: 4px;
  top: 8px;
  pointer-events: none;
}

.swatches {
  margin-top: 5px;
}

.swatches .filters {
  gap: 1px;
}

.palette {
  display: grid;
  grid-template-columns: repeat(8, 13px);
  grid-auto-rows: 13px;
  margin-left: 95px;
  padding: 4px;
  height: 77px;
  border: 2px solid;
  border-color: #a0a0a0 #fff #fff #a0a0a0;
  box-shadow: inset 1px 1px #696969, inset -1px -1px #e3e3e3;
}

.palette button.picked {
  border: 2px solid #c05a00;
}

.spectrum {
  position: relative;
  height: 69px;
  margin: 9px 1px 11px 26px;
  border: 2px solid;
  border-color: #8a8a8a #eee #eee #8a8a8a;
  background:
    linear-gradient(#fff, rgba(255,255,255,0) 50%, rgba(0,0,0,0) 50%, #000),
    linear-gradient(90deg, #f00, #ff0 16.7%, #0f0 33.3%, #0ff 50%, #00f 66.7%, #f0f 83.3%, #f00);
}

/* marker for the current colour */
.cross {
  position: absolute;
  left: 17px;
  top: 8px;
}

.channel {
  height: 29px;
}

.channel + .channel {
  margin-top: 12px;
}

.channel i {
  width: 18px;
  height: 18px;
  margin: 3px 3px 0;
  border: 1px solid;
  flex: none;
}

.red i {
  background: linear-gradient(#ff4a10, #c81400);
  border-color: #8a1a08;
}

.green i {
  background: linear-gradient(#10ff10, #00b400);
  border-color: #2a8a10;
}

.blue i {
  background: linear-gradient(#1070ff, #0010ff);
  border-color: #0a20b0;
}

.field {
  flex: 1;
  min-width: 0;
}

.num {
  display: flex;
  height: 20px;
  padding: 1px;
  background: #fff;
  border: 1px solid #a5a5ad;
}

.num input {
  flex: 1;
  min-width: 0;
  padding: 0 0 1px 2px;
  color: #000;
  appearance: textfield;
  outline: none;
}

.num input::-webkit-inner-spin-button {
  display: none;
}

.spin {
  display: flex;
  flex-direction: column;
  width: 14px;
}

.spin button {
  display: flex;
  align-items: center;
  justify-content: center;
  flex: 1;
  background: #eee;
  border: 1px solid #a8a8a8;
}

.spin button::before {
  content: '';
  border: solid transparent;
  border-width: 0 3px 3px;
  border-bottom-color: #000;
}

.spin button:last-child::before {
  border-width: 3px 3px 0;
  border-top-color: #000;
}

.field input[type="range"] {
  display: block;
  width: 100%;
  height: 9px;
  border: solid #88bfe8;
  border-width: 0 1px 1px;
  appearance: none;
}

.field input[type="range"]::-webkit-slider-thumb {
  width: 6px;
  height: 11px;
  margin-top: 5px;
  background: #fff;
  border: 1px solid #4a8a50;
  border-radius: 3px 3px 1px 1px;
  appearance: none;
}

.red input[type="range"] {
  background: linear-gradient(90deg, #00bc84, #ffbc84);
}

.green input[type="range"] {
  background: linear-gradient(90deg, #fc0084, #fcff84);
}

.blue input[type="range"] {
  background: linear-gradient(90deg, #fcbc00, #fcbcff);
}

.props input[type="radio"] {
  width: 13px;
  height: 13px;
  margin: 0 3px 0 0;
  border: 1px solid #333;
  border-radius: 50%;
  background: #fff;
  appearance: none;
}

.props input[type="radio"]:checked {
  background: radial-gradient(#222 3px, #fff 4px);
}

.props label {
  display: flex;
  align-items: center;
  color: #000;
}

.model {
  display: flex;
  gap: 61px;
  height: 30px;
  padding: 0 0 7px 121px;
}

.states {
  padding-left: 12px;
}

.states label {
  height: 17px;
}

.statelist {
  display: flex;
  align-items: center;
  gap: 4px;
  height: 24px;
  margin: 4px 0 0 26px;
  padding-left: 5px;
  border: 1px solid #8a8a92;
  background: #efefef;
  color: #b8b8b8;
}

.scrollbar {
  display: flex;
  flex-direction: column;
  width: 15px;
  background: #f0f0f0;
  flex: none;
}

.scrollbar button {
  display: flex;
  align-items: center;
  justify-content: center;
  height: 17px;
  flex: none;
}

.scrollbar .thumb {
  height: 84%;
  margin-bottom: auto;
  background: #cdcdcd;
  min-height: 0;
}

.panel-end {
  height: 5px;
  border: solid var(--soft-line);
  border-width: 0 0 1px;
  flex: none;
}

/* collapse handle sits over the viewport edge */
.splitter {
  position: absolute;
  left: 100%;
  top: 416px;
  width: 8px;
  height: 39px;
  background: var(--bg);
  border: 1px solid var(--line);
  border-left: none;
}

.viewport {
  position: relative;
  flex: 1;
  min-width: 0;
  overflow: hidden;
}

.scene {
  width: 100%;
  height: 100%;
}

.triad text {
  font-size: 10px;
}

.flyout {
  position: absolute;
  left: 6px;
  top: 6px;
  display: flex;
  align-items: center;
  gap: 4px;
  color: #000;
}

.flyout button {
  width: 14px;
}

/* bottom tabs */
.bottom {
  display: flex;
  height: 16px;
  margin-bottom: 1px;
  border: solid var(--line);
  border-width: 1px 0;
  line-height: 13px;
  flex: none;
}

.bottom a {
  padding: 0 19px 0 9px;
  background: var(--tab);
  border-right: 1px solid var(--line);
}

.bottom a.active {
  padding: 0 10px 0 12px;
  background: var(--bg);
  font-weight: bold;
  color: #000;
}

.navs {
  display: flex;
  width: 67px;
  padding-left: 2px;
  background: #a0a0a0;
  flex: none;
}

.navs button {
  display: flex;
  align-items: center;
  justify-content: center;
  flex: 1;
  border: 1px solid #888;
  background: #ababab;
  fill: #858585;
}
```
